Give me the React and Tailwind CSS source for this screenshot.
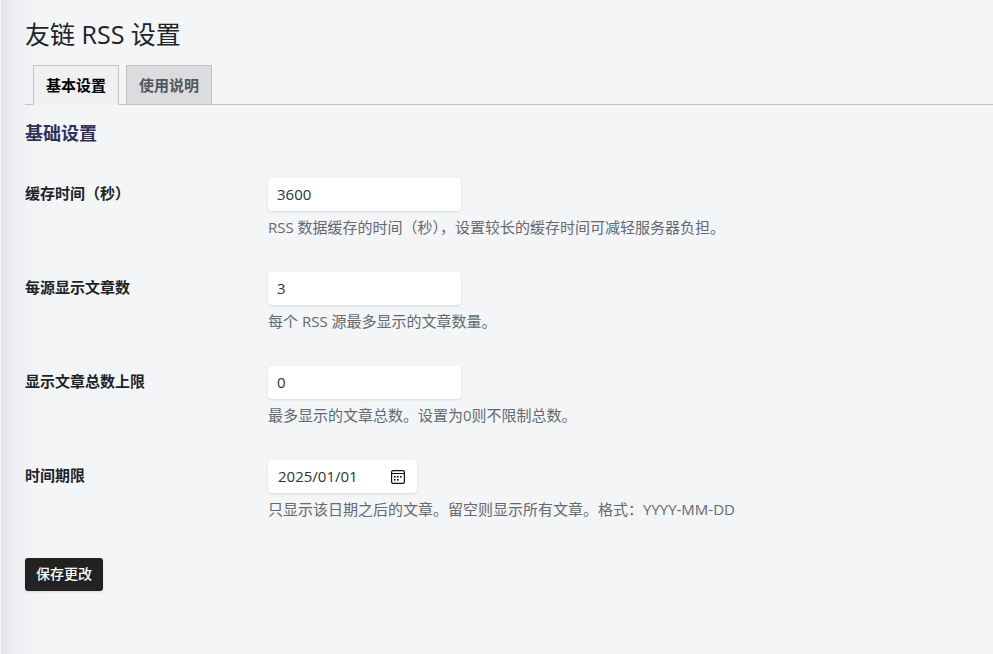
import React, { useState } from "react";

const numberFields = [
  {
    id: "cache_time",
    label: "缓存时间（秒）",
    help: "RSS 数据缓存的时间（秒），设置较长的缓存时间可减轻服务器负担。",
  },
  {
    id: "per_feed",
    label: "每源显示文章数",
    help: "每个 RSS 源最多显示的文章数量。",
  },
  {
    id: "total_limit",
    label: "显示文章总数上限",
    help: "最多显示的文章总数。设置为0则不限制总数。",
  },
];

const tabs = [
  { id: "basic", label: "基本设置" },
  { id: "help", label: "使用说明" },
];

const CalendarIcon = () => (
  <svg width="14" height="14" viewBox="0 0 14 14" fill="none" aria-hidden="true">
    <rect x="0.6" y="0.6" width="12.8" height="12.8" rx="1.5" stroke="#111" strokeWidth="1.2" />
    <path d="M1 3.5h12" stroke="#111" strokeWidth="1" />
    <g fill="#111">
      <rect x="3" y="6" width="1.6" height="1.6" />
      <rect x="6" y="6" width="1.6" height="1.6" />
      <rect x="9" y="6" width="1.6" height="1.6" />
      <rect x="3" y="9" width="1.6" height="1.6" />
      <rect x="6" y="9" width="1.6" height="1.6" />
    </g>
  </svg>
);

const Row = ({ id, label, help, children }) => (
  <div className="grid grid-cols-[243px_1fr]">
    <label htmlFor={id} className="pt-[5px] font-bold text-[#1d2327]">
      {label}
    </label>
    <div>
      {children}
      <p className="mt-1.5 text-[#646970]">{help}</p>
    </div>
  </div>
);

const App = () => {
  const [activeTab, setActiveTab] = useState("basic");
  const [values, setValues] = useState({
    cache_time: "3600",
    per_feed: "3",
    total_limit: "0",
    date_limit: "2025/01/01",
  });

  const setValue = (id, value) => setValues({ ...values, [id]: value });

  return (
    <div className="min-h-screen border-l border-[#f6f7f8] bg-[#f3f5f7] bg-[linear-gradient(to_right,#e1e3e6_0px,#eaecef_10px,#eff1f4_20px,#f3f5f7_44px)] pl-6 font-['Open_Sans','Noto_Sans_CJK_SC',sans-serif] text-[15px] leading-5">
      <h1 className="pt-[19px] text-[25px] leading-[30px] text-[#1d2327]">友链 RSS 设置</h1>

      <nav className="mt-4 flex gap-[7px] border-b border-[#c3c4c7] pl-2">
        {tabs.map((tab) => (
          <button
            key={tab.id}
            type="button"
            onClick={() => setActiveTab(tab.id)}
            className={`-mb-px h-10 border border-[#c3c4c7] px-3 font-bold ${
              activeTab === tab.id
                ? "border-b-[#f0f0f1] bg-[#f0f0f1] text-black"
                : "bg-[#dcdcde] text-[#50575e]"
            }`}
          >
            {tab.label}
          </button>
        ))}
      </nav>

      <form onSubmit={(e) => e.preventDefault()}>
        <h2 className="pt-4 text-[18px] leading-6 font-bold text-[#30305a]">基础设置</h2>

        <div className="mt-[33px] flex flex-col gap-[35px]">
          {numberFields.map((field) => (
            <Row key={field.id} id={field.id} label={field.label} help={field.help}>
              <input
                id={field.id}
                type="text"
                inputMode="numeric"
                value={values[field.id]}
                onChange={(e) => setValue(field.id, e.target.value)}
                className="block h-[33px] w-[193px] rounded bg-white px-[9px] pb-0.5 text-[#2c3338] shadow-sm"
              />
            </Row>
          ))}

          <Row id="date_limit" label="时间期限" help="只显示该日期之后的文章。留空则显示所有文章。格式：YYYY-MM-DD">
            <div className="flex h-[33px] w-[149px] items-center rounded bg-white pr-3 pl-[10px] shadow-sm">
              <input
                id="date_limit"
                type="text"
                value={values.date_limit}
                onChange={(e) => setValue("date_limit", e.target.value)}
                className="min-w-0 flex-1 pb-0.5 text-[#2c3338]"
              />
              <button type="button" aria-label="选择日期">
                <CalendarIcon />
              </button>
            </div>
          </Row>
        </div>

        <button
          type="submit"
          className="mt-[39px] h-[33px] rounded-[3px] bg-[#222] px-[11px] pb-0.5 text-[14px] font-medium text-white shadow-sm"
        >
          保存更改
        </button>
      </form>
    </div>
  );
};

export default App;
